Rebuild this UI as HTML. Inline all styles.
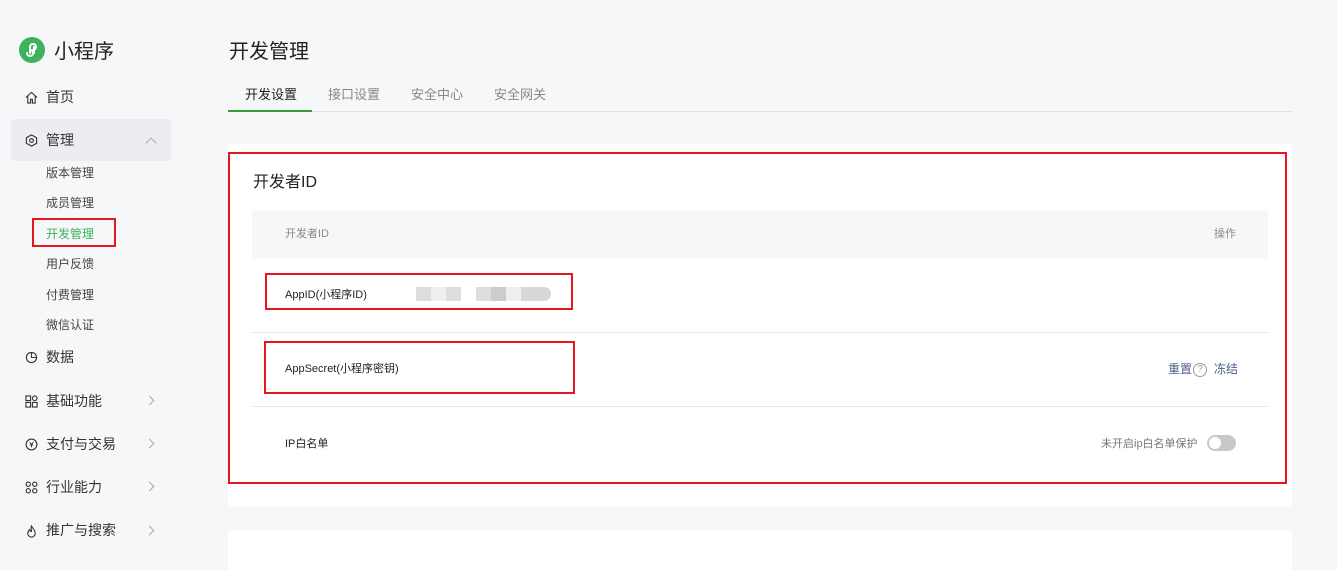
<!DOCTYPE html>
<html><head><meta charset="utf-8"><style>
*{margin:0;padding:0;box-sizing:border-box}
body{width:1337px;height:557px;overflow:hidden;background:#f6f7f9;font-family:"Liberation Sans","Noto Sans CJK SC",sans-serif;position:relative;color:#333}
.a{position:absolute;white-space:nowrap}
div.a:not(:empty){margin-top:-2px}
.nav{font-size:14px;color:#333}
.sub{font-size:12px;color:#444}
.ic{position:absolute;left:25px;width:13px;height:13px}
.chev{position:absolute;left:146px;width:7px;height:7px;border-right:1.2px solid #aaa;border-top:1.2px solid #aaa;transform:rotate(45deg)}
.red{position:absolute;border:2px solid #e4161f}
</style></head><body>
<div class="a" style="left:19px;top:37px;width:26px;height:26px;border-radius:50%;background:#3db35b"></div>
<svg class="a" style="left:19px;top:37px" width="26" height="26" viewBox="0 0 26 26"><path d="M8 16a3 3 0 1 0 3-3M11 16V10a3 3 0 1 1 3 3M15 10v6" fill="none" stroke="#fff" stroke-width="2" stroke-linecap="round"/></svg>
<div class="a" style="left:54px;top:37px;font-size:20px;color:#222">小程序</div>
<svg class="ic" style="top:91px" viewBox="0 0 14 14"><path d="M1 7L7 1.5 13 7M3 5.5V13h3V9h2v4h3V5.5" fill="none" stroke="#333" stroke-width="1.2"/></svg>
<div class="a nav" style="left:46px;top:89px">首页</div>
<div class="a" style="left:11px;top:119px;width:160px;height:42px;background:#ecedf0;border-radius:4px"></div>
<svg class="ic" style="top:134px" viewBox="0 0 14 14"><path d="M7 1l5.5 3v6L7 13 1.5 10V4z" fill="none" stroke="#333" stroke-width="1.2"/><circle cx="7" cy="7" r="2" fill="none" stroke="#333" stroke-width="1.2"/></svg>
<div class="a nav" style="left:46px;top:132px">管理</div>
<div class="a" style="left:147px;top:139px;width:8px;height:8px;border-left:1.2px solid #aaa;border-top:1.2px solid #aaa;transform:rotate(45deg)"></div>
<div class="a sub" style="left:46px;top:166px">版本管理</div>
<div class="a sub" style="left:46px;top:196px">成员管理</div>
<div class="a sub" style="left:46px;top:227px;color:#3db35b">开发管理</div>
<div class="red" style="left:32px;top:218px;width:84px;height:29px"></div>
<div class="a sub" style="left:46px;top:257px">用户反馈</div>
<div class="a sub" style="left:46px;top:288px">付费管理</div>
<div class="a sub" style="left:46px;top:318px">微信认证</div>
<svg class="ic" style="top:351px" viewBox="0 0 14 14"><circle cx="7" cy="7" r="5.5" fill="none" stroke="#333" stroke-width="1.2"/><path d="M7 1.5V7h5.5" fill="none" stroke="#333" stroke-width="1.2"/></svg>
<div class="a nav" style="left:46px;top:349px">数据</div>
<svg class="ic" style="top:395px" viewBox="0 0 14 14"><g fill="none" stroke="#333" stroke-width="1.2"><rect x="1" y="1" width="5" height="5"/><rect x="8" y="8" width="5" height="5"/><rect x="1" y="8" width="5" height="5"/><circle cx="10.5" cy="3.5" r="2.5"/></g></svg>
<div class="a nav" style="left:46px;top:393px">基础功能</div><div class="chev" style="top:397px"></div>
<svg class="ic" style="top:438px" viewBox="0 0 14 14"><circle cx="7" cy="7" r="5.8" fill="none" stroke="#333" stroke-width="1.2"/><path d="M5 4.5L7 7l2-2.5M7 7v3M5.2 7.5h3.6" fill="none" stroke="#333" stroke-width="1"/></svg>
<div class="a nav" style="left:46px;top:436px">支付与交易</div><div class="chev" style="top:440px"></div>
<svg class="ic" style="top:481px" viewBox="0 0 14 14"><g fill="none" stroke="#333" stroke-width="1.2"><circle cx="3.5" cy="3.5" r="2.3"/><circle cx="10.5" cy="3.5" r="2.3"/><circle cx="3.5" cy="10.5" r="2.3"/><circle cx="10.5" cy="10.5" r="2.3"/></g></svg>
<div class="a nav" style="left:46px;top:479px">行业能力</div><div class="chev" style="top:483px"></div>
<svg class="ic" style="top:525px" viewBox="0 0 14 14"><path d="M7 1c1 3 4 4 4 8a4 4 0 0 1-8 0c0-2 1-3 2-4 0 1 1 2 2 2 0-2-1-4 0-6z" fill="none" stroke="#333" stroke-width="1.2"/></svg>
<div class="a nav" style="left:46px;top:522px">推广与搜索</div><div class="chev" style="top:527px"></div>
<div class="a" style="left:229px;top:37px;font-size:20px;color:#222">开发管理</div>
<div class="a" style="left:228px;top:111px;width:1064px;height:1px;background:#e2e3e6"></div>
<div class="a" style="left:228px;top:110px;width:84px;height:2px;background:#3a9a3e"></div>
<div class="a" style="left:245px;top:86px;font-size:13px;color:#222">开发设置</div>
<div class="a" style="left:328px;top:86px;font-size:13px;color:#888">接口设置</div>
<div class="a" style="left:411px;top:86px;font-size:13px;color:#888">安全中心</div>
<div class="a" style="left:494px;top:86px;font-size:13px;color:#888">安全网关</div>
<div class="a" style="left:228px;top:144px;width:1064px;height:362px;background:#fff;border-radius:3px"></div>
<div class="a" style="left:228px;top:530px;width:1064px;height:40px;background:#fff;border-radius:3px"></div>
<div class="red" style="left:228px;top:152px;width:1059px;height:332px"></div>
<div class="a" style="left:253px;top:170px;font-size:16px;color:#222">开发者ID</div>
<div class="a" style="left:252px;top:210px;width:1016px;height:48px;background:#f6f7f9"></div>
<div class="a" style="left:285px;top:227px;font-size:11px;color:#888">开发者ID</div>
<div class="a" style="left:1214px;top:227px;font-size:11px;color:#888">操作</div>
<div class="a" style="left:285px;top:288px;font-size:11px;color:#222">AppID(小程序ID)</div>
<div class="a" style="left:416px;top:287px;width:135px;height:14px;background:linear-gradient(90deg,#ddd 0 15px,#eee 15px 30px,#ddd 30px 45px,#fff 45px 60px,#ddd 60px 75px,#ccc 75px 90px,#eee 90px 105px,#d8d8d8 105px 135px);border-radius:0 7px 7px 0"></div>
<div class="red" style="left:265px;top:273px;width:308px;height:37px"></div>
<div class="a" style="left:252px;top:332px;width:1016px;height:1px;background:#e8e8e8"></div>
<div class="a" style="left:285px;top:362px;font-size:11px;color:#222">AppSecret(小程序密钥)</div>
<div class="red" style="left:264px;top:341px;width:311px;height:53px"></div>
<div class="a" style="left:1168px;top:362px;font-size:12px;color:#4e5f8a">重置</div>
<div class="a" style="left:1193px;top:365px;width:14px;height:14px;border:1px solid #999;border-radius:50%;font-size:10px;line-height:12px;text-align:center;color:#999">?</div>
<div class="a" style="left:1214px;top:362px;font-size:12px;color:#4e5f8a">冻结</div>
<div class="a" style="left:252px;top:406px;width:1016px;height:1px;background:#e8e8e8"></div>
<div class="a" style="left:285px;top:437px;font-size:11px;color:#222">IP白名单</div>
<div class="a" style="left:1101px;top:437px;font-size:11px;color:#777">未开启ip白名单保护</div>
<div class="a" style="left:1207px;top:435px;width:29px;height:16px;border-radius:8px;background:#c8c8c8"></div>
<div class="a" style="left:1209px;top:437px;width:12px;height:12px;border-radius:50%;background:#fff"></div>
</body></html>
